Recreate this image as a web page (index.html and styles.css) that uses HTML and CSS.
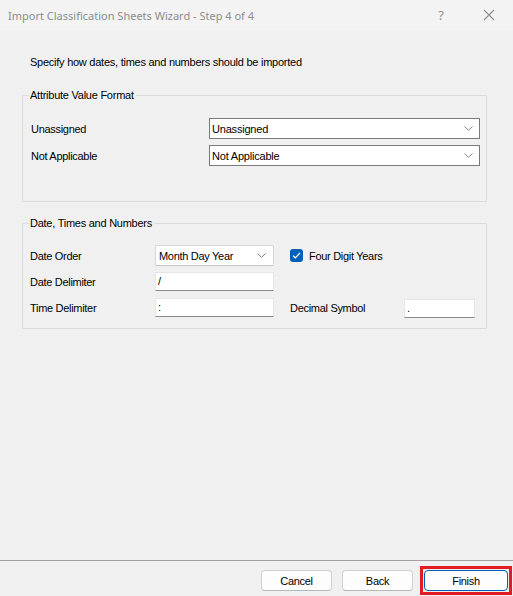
FILE: index.html
```html
<!DOCTYPE html>
<html lang="en">
<head>
<meta charset="utf-8">
<title>Import Classification Sheets Wizard</title>
<link rel="stylesheet" href="styles.css">
</head>
<body>
<div class="window">
  <header class="titlebar">
    <span class="title">Import Classification Sheets Wizard - Step 4 of 4</span>
    <span class="tb-btn tb-help">?</span>
    <span class="tb-btn tb-close">
      <svg width="12" height="12" viewBox="0 0 12 12"><path d="M1 1L11 11M11 1L1 11" stroke="#8f8f8f" stroke-width="1.1" fill="none"/></svg>
    </span>
  </header>

  <main class="content">
    <p class="intro">Specify how dates, times and numbers should be imported</p>

    <section class="group group-format">
      <span class="legend">Attribute Value Format</span>
      <div class="format-rows">
        <span class="lbl">Unassigned</span>
        <div class="combo combo-classic">
          <span class="combo-text">Unassigned</span>
          <svg class="chev" width="9" height="5" viewBox="0 0 9 5"><path d="M0.5 0.5L4.5 4.3L8.5 0.5" stroke="#777" stroke-width="0.9" fill="none"/></svg>
        </div>
        <span class="lbl">Not Applicable</span>
        <div class="combo combo-classic">
          <span class="combo-text">Not Applicable</span>
          <svg class="chev" width="9" height="5" viewBox="0 0 9 5"><path d="M0.5 0.5L4.5 4.3L8.5 0.5" stroke="#777" stroke-width="0.9" fill="none"/></svg>
        </div>
      </div>
    </section>

    <section class="group group-dates">
      <span class="legend">Date, Times and Numbers</span>
      <div class="date-grid">
        <span class="lbl row1">Date Order</span>
        <div class="combo combo-modern row1">
          <span class="combo-text">Month Day Year</span>
          <svg class="chev" width="9" height="5" viewBox="0 0 9 5"><path d="M0.5 0.5L4.5 4.3L8.5 0.5" stroke="#666" stroke-width="0.9" fill="none"/></svg>
        </div>
        <label class="check row1">
          <span class="box"><svg width="9" height="7" viewBox="0 0 9 7"><path d="M1 3.6L3.3 5.8L8 1" stroke="#fff" stroke-width="1.2" fill="none"/></svg></span>
          <span>Four Digit Years</span>
        </label>

        <span class="lbl row2">Date Delimiter</span>
        <div class="field row2">/</div>

        <span class="lbl row3">Time Delimiter</span>
        <div class="field row3">:</div>
        <span class="lbl row3 dec-lbl">Decimal Symbol</span>
        <div class="field field-small row3">.</div>
      </div>
    </section>
  </main>

  <footer class="footer">
    <button class="btn">Cancel</button>
    <button class="btn btn-back">Back</button>
    <span class="highlight"><button class="btn btn-default">Finish</button></span>
  </footer>
</div>
</body>
</html>
```

FILE: styles.css
```css
html, body {
  margin: 0;
  padding: 0;
  background: #f0f0f0;
}

.window {
  width: 513px;
  height: 596px;
  display: flex;
  flex-direction: column;
  background: #f0f0f0;
  font-family: "Liberation Sans", Arial, sans-serif;
  color: #000;
  overflow: hidden;
}

/* title bar */
.titlebar {
  height: 30px;
  flex: none;
  display: flex;
  align-items: center;
  background: #f3f3f3;
  padding-left: 8px;
  box-sizing: border-box;
}
.title {
  flex: 1;
  font-family: "Noto Sans", "Liberation Sans", sans-serif;
  font-size: 11px;
  color: #8d8d8d;
}
.tb-btn {
  width: 46px;
  display: flex;
  justify-content: center;
  align-items: center;
  color: #909090;
  font-family: "Noto Sans", sans-serif;
}
.tb-help {
  font-size: 13px;
  margin-right: 2px;
}
.tb-close {
  margin-right: 1px;
}

/* body */
.content {
  flex: 1;
  padding-top: 25px;
}
.intro {
  margin: 0 0 26px 30px;
  font-size: 11px;
  letter-spacing: -0.25px;
  line-height: 14px;
}

.group {
  margin-left: 22px;
  width: 465px;
  box-sizing: border-box;
  border: 1px solid #dcdcdc;
  display: flex;
  flex-direction: column;
}
.legend {
  align-self: flex-start;
  margin: -8px 0 0 6px;
  padding: 0 2px 0 1px;
  height: 14px;
  line-height: 14px;
  font-size: 11px;
  letter-spacing: -0.25px;
  background: #f0f0f0;
}

.lbl {
  font-size: 11px;
  letter-spacing: -0.3px;
  display: flex;
  align-items: center;
}

/* attribute value format */
.group-format {
  padding-bottom: 35px;
}
.format-rows {
  margin: 16px 0 0 8px;
  display: grid;
  grid-template-columns: 178px 271px;
  grid-auto-rows: 21px;
  row-gap: 6px;
}

.combo {
  box-sizing: border-box;
  background: #fff;
  display: flex;
  align-items: center;
  justify-content: space-between;
  font-size: 11px;
}
.combo-classic {
  border: 1px solid #7a7a7a;
  padding: 0 6px 0 2px;
  letter-spacing: -0.2px;
}
.combo-modern {
  border: 1px solid #d6d6d6;
  border-bottom-color: #c2c2c2;
  border-radius: 2px;
  padding: 0 7px 0 3px;
  letter-spacing: -0.3px;
}

/* dates, times and numbers */
.group-dates {
  margin-top: 21px;
  padding-bottom: 10px;
}
.date-grid {
  margin: 15px 0 0 7px;
  display: grid;
  grid-template-columns: 125px 119px 16px 114px 71px;
  grid-template-rows: 21px 19px 21px;
  row-gap: 6px;
}
.date-grid > .row1 { grid-row: 1; }
.date-grid > .row2 { grid-row: 2; }
.date-grid > .row3 { grid-row: 3; margin-top: 1px; }
.date-grid > .row3:not(.lbl) { height: 19px; }
.date-grid .lbl { grid-column: 1; }
.date-grid .combo, .date-grid .field { grid-column: 2; }
.date-grid .check { grid-column: 4 / span 2; }
.date-grid .dec-lbl { grid-column: 4; }
.date-grid .field-small { grid-column: 5; margin-top: 2px; }

.field {
  box-sizing: border-box;
  height: 19px;
  background: #fff;
  border: 1px solid #e6e6e6;
  border-bottom: 1px solid #8a8a8a;
  font-size: 11px;
  line-height: 17px;
  padding-left: 2px;
}

.check {
  display: flex;
  align-items: center;
  gap: 6px;
  font-size: 11px;
  letter-spacing: -0.3px;
}
.box {
  width: 13px;
  height: 13px;
  border-radius: 3px;
  background: #005fb8;
  display: flex;
  align-items: center;
  justify-content: center;
}

/* footer with buttons */
.footer {
  flex: none;
  height: 36px;
  box-sizing: border-box;
  border-top: 1px solid #a0a0a0;
  display: flex;
  justify-content: flex-end;
  align-items: flex-start;
  padding: 5px 1px 0 0;
  gap: 10px;
}
.btn {
  box-sizing: border-box;
  width: 71px;
  height: 21px;
  margin-top: 4px;
  background: #fdfdfd;
  border: 1px solid #d0d0d0;
  border-bottom-color: #b8b8b8;
  border-radius: 4px;
  font-family: "Liberation Sans", Arial, sans-serif;
  font-size: 11px;
  letter-spacing: -0.3px;
  color: #000;
  padding: 0;
}
.btn-back {
  margin-right: -3px;
}
.highlight {
  display: flex;
  border: 3px solid #e31b23;
  padding: 1px;
}
.btn-default {
  width: 84px;
  margin-top: 0;
  border: 1px solid #005fb8;
}
```
